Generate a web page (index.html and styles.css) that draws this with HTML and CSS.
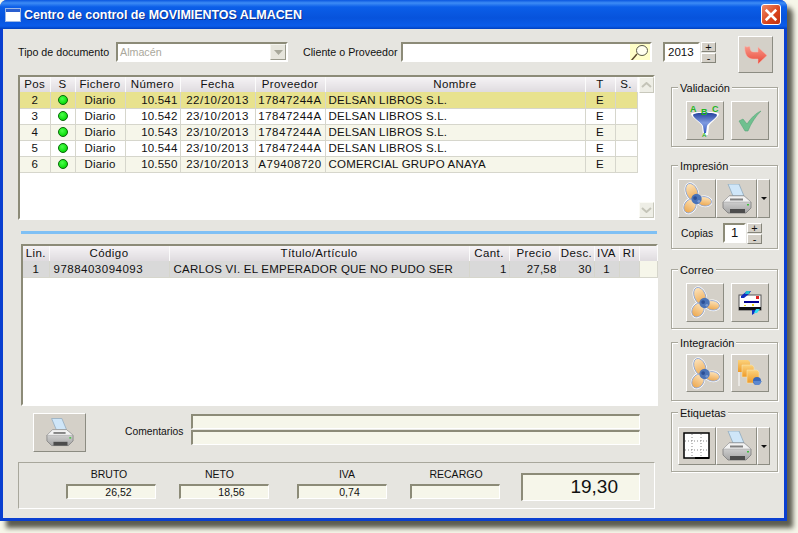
FILE: index.html
```html
<!DOCTYPE html>
<html lang="es">
<head>
<meta charset="utf-8">
<title>Centro de control de MOVIMIENTOS ALMACEN</title>
<link rel="stylesheet" href="styles.css">
</head>
<body>
<svg class="defs" width="0" height="0" aria-hidden="true">
  <defs>
    <linearGradient id="petal" x1="0" y1="0" x2="0" y2="1"><stop offset="0" stop-color="#fde4bc"/><stop offset="1" stop-color="#eca850"/></linearGradient>
    <linearGradient id="funnel" x1="0" y1="0" x2="0" y2="1"><stop offset="0" stop-color="#24409c"/><stop offset=".5" stop-color="#7f9be0"/><stop offset="1" stop-color="#3a5cc0"/></linearGradient>
    <linearGradient id="arrow" x1="0" y1="0" x2="0" y2="1"><stop offset="0" stop-color="#f9988a"/><stop offset="1" stop-color="#e84838"/></linearGradient>
    <linearGradient id="folder" x1="0" y1="0" x2="0" y2="1"><stop offset="0" stop-color="#fbd27c"/><stop offset="1" stop-color="#ee9a28"/></linearGradient>
    <linearGradient id="pbody" x1="0" y1="0" x2="0" y2="1"><stop offset="0" stop-color="#e4e4e4"/><stop offset="1" stop-color="#a4a4a4"/></linearGradient>
    <symbol id="i-prop" viewBox="0 0 32 34">
      <g stroke="#fff" stroke-width="2.400" fill="none">
        <ellipse cx="10.500" cy="10" rx="6" ry="9.500" transform="rotate(-22 10.500 10)"/>
        <ellipse cx="8.500" cy="25" rx="6" ry="8" transform="rotate(32 8.500 25)"/>
        <ellipse cx="24" cy="20" rx="7.500" ry="5" transform="rotate(8 24 20)"/>
      </g>
      <g stroke="#8ba3d2" stroke-width=".9" fill="url(#petal)">
        <ellipse cx="10.500" cy="10" rx="6" ry="9.500" transform="rotate(-22 10.500 10)"/>
        <ellipse cx="8.500" cy="25" rx="6" ry="8" transform="rotate(32 8.500 25)"/>
        <ellipse cx="24" cy="20" rx="7.500" ry="5" transform="rotate(8 24 20)"/>
      </g>
      <circle cx="15.500" cy="17.500" r="5.500" fill="#4b74b8"/>
      <circle cx="14" cy="16.500" r="2" fill="#2c4f96"/>
      <circle cx="18" cy="20" r="1.500" fill="#7c9bd2"/>
    </symbol>
    <symbol id="i-print" viewBox="0 0 30 30">
      <path d="M6 0l11 0 5 12H11z" fill="#cfe6f8" stroke="#8fa9bd" stroke-width=".8"/>
      <path d="M1 18l6-6h15l7 6v6l-5 5H6l-5-5z" fill="url(#pbody)" stroke="#7c7c7c" stroke-width=".8"/>
      <path d="M1 18l6-6h15l7 6z" fill="#f2f2f2" stroke="#9a9a9a" stroke-width=".5"/>
      <path d="M8 25h15v4H8z" fill="#4c4c4c"/>
      <path d="M8 14.500h13v2H8z" fill="#808080"/>
      <rect x="25" y="20" width="2" height="1.500" fill="#3fbf3f"/>
    </symbol>
    <symbol id="i-mag" viewBox="0 0 20 18">
      <path d="M1 17l6-7" stroke="#5b4a2c" stroke-width="1.500" fill="none"/>
      <ellipse cx="12" cy="6.500" rx="5.500" ry="5" fill="#fffff0" stroke="#5a5a48" stroke-width="1"/>
    </symbol>
  </defs>
</svg>

<div class="window">
  <header class="titlebar">
    <svg class="appicon" viewBox="0 0 16 14"><rect x=".5" y=".5" width="15" height="13" fill="#fff" stroke="#9db8e6"/><rect x="1" y="1" width="14" height="3" fill="#2a5fd0"/></svg>
    <h1 class="title">Centro de control de MOVIMIENTOS ALMACEN</h1>
    <button class="close" aria-label="Cerrar">
      <svg viewBox="0 0 12 12"><path d="M1.500 1.500l9 9M10.500 1.500l-9 9" stroke="#fff" stroke-width="2.200" fill="none"/></svg>
    </button>
  </header>

  <div class="client">
    <div class="toolbar">
      <span class="label label-tipo">Tipo de documento</span>
      <div class="field combo">
        <span class="disabled">Almacén</span>
        <span class="combo-btn"><svg viewBox="0 0 9 5" width="9" height="5"><path d="M0 0h9L4.500 5z" fill="#a8a89a"/></svg></span>
      </div>
      <span class="label label-cliente">Cliente o Proveedor</span>
      <div class="field search">
        <span class="search-btn"><svg width="20" height="18"><use href="#i-mag"/></svg></span>
      </div>
      <div class="field year">2013</div>
      <div class="spin"><span class="spin-btn">+</span><span class="spin-btn">-</span></div>
      <button class="btn exit" aria-label="Salir">
        <svg viewBox="0 0 24 20" width="24" height="20"><path d="M1 1c0 0 1 1 2 1s2-1 3 0c0 3 1 5 4 5h4V2l9 8.500-9 8.500v-5H9C3 14 0 8 1 1z" fill="url(#arrow)" stroke="#f6b9b0" stroke-width=".5"/></svg>
      </button>
    </div>

    <div class="columns">
      <main class="main">
        <div class="panel grid-top">
          <table class="grid g1">
            <colgroup><col class="c1"><col class="c2"><col class="c3"><col class="c4"><col class="c5"><col class="c6"><col class="c7"><col class="c8"><col class="c9"></colgroup>
            <thead><tr><th>Pos</th><th>S</th><th>Fichero</th><th>Número</th><th>Fecha</th><th>Proveedor</th><th>Nombre</th><th>T</th><th>S.</th></tr></thead>
            <tbody>
              <tr class="sel"><td class="ctr">2</td><td class="ctr"><i class="dot"></i></td><td class="ctr">Diario</td><td class="num">10.541</td><td class="ctr wide-text">22/10/2013</td><td class="ctr wide-text">17847244A</td><td>DELSAN LIBROS S.L.</td><td class="ctr">E</td><td></td></tr>
              <tr><td class="ctr">3</td><td class="ctr"><i class="dot"></i></td><td class="ctr">Diario</td><td class="num">10.542</td><td class="ctr wide-text">23/10/2013</td><td class="ctr wide-text">17847244A</td><td>DELSAN LIBROS S.L.</td><td class="ctr">E</td><td></td></tr>
              <tr class="alt"><td class="ctr">4</td><td class="ctr"><i class="dot"></i></td><td class="ctr">Diario</td><td class="num">10.543</td><td class="ctr wide-text">23/10/2013</td><td class="ctr wide-text">17847244A</td><td>DELSAN LIBROS S.L.</td><td class="ctr">E</td><td></td></tr>
              <tr><td class="ctr">5</td><td class="ctr"><i class="dot"></i></td><td class="ctr">Diario</td><td class="num">10.544</td><td class="ctr wide-text">23/10/2013</td><td class="ctr wide-text">17847244A</td><td>DELSAN LIBROS S.L.</td><td class="ctr">E</td><td></td></tr>
              <tr class="alt"><td class="ctr">6</td><td class="ctr"><i class="dot"></i></td><td class="ctr">Diario</td><td class="num">10.550</td><td class="ctr wide-text">23/10/2013</td><td class="ctr wide-text">A79408720</td><td>COMERCIAL GRUPO ANAYA</td><td class="ctr">E</td><td></td></tr>
            </tbody>
          </table>
          <div class="scrollbar">
            <span class="sb-btn"><svg width="11" height="6" viewBox="0 0 11 6"><path d="M1 5l4.500-4L10 5" stroke="#c4c4b8" stroke-width="2" fill="none"/></svg></span>
            <span class="sb-btn"><svg width="11" height="6" viewBox="0 0 11 6"><path d="M1 1l4.500 4L10 1" stroke="#c4c4b8" stroke-width="2" fill="none"/></svg></span>
          </div>
        </div>

        <div class="splitter"></div>

        <div class="panel grid-bottom">
          <table class="grid g2">
            <colgroup><col class="d1"><col class="d2"><col class="d3"><col class="d4"><col class="d5"><col class="d6"><col class="d7"><col class="d8"><col class="d9"></colgroup>
            <thead><tr><th>Lin.</th><th>Código</th><th>Título/Artículo</th><th>Cant.</th><th>Precio</th><th>Desc.</th><th>IVA</th><th>RI</th><th></th></tr></thead>
            <tbody>
              <tr class="grey"><td class="ctr">1</td><td class="pad code">9788403094093</td><td class="pad articulo">CARLOS VI. EL EMPERADOR QUE NO PUDO SER</td><td class="num">1</td><td class="num">27,58</td><td class="num">30</td><td class="ctr">1</td><td></td><td class="tail"></td></tr>
            </tbody>
          </table>
        </div>

        <div class="comments">
          <button class="btn print-big" aria-label="Imprimir"><svg width="28" height="29"><use href="#i-print"/></svg></button>
          <span class="label label-com">Comentarios</span>
          <div class="com-fields"><div class="field cream com"></div><div class="field cream com"></div></div>
        </div>

        <section class="totals">
          <div class="total t1"><span class="t-label">BRUTO</span><div class="field cream amount">26,52</div></div>
          <div class="total t2"><span class="t-label">NETO</span><div class="field cream amount">18,56</div></div>
          <div class="total t3"><span class="t-label">IVA</span><div class="field cream amount">0,74</div></div>
          <div class="total t4"><span class="t-label">RECARGO</span><div class="field cream amount"></div></div>
          <div class="field cream grand">19,30</div>
        </section>
      </main>

      <aside class="side">
        <section class="group g-val">
          <h2 class="legend">Validación</h2>
          <div class="btns spaced">
            <button class="btn tool" aria-label="Filtrar">
              <svg width="34" height="34" viewBox="0 0 34 34">
                <path d="M3 10c0-3 28-3 28 0 0 3-9 9-10 12l-1 9h-5l-1-9C13 19 3 13 3 10z" fill="#fff"/>
                <path d="M5 11c0-3 24-3 24 0 0 3-9 8-10 11l-1 7h-2l-1-7C14 19 5 14 5 11z" fill="url(#funnel)"/>
                <text x="2" y="8" class="abc">A</text><text x="13" y="11" class="abc">B</text><text x="24" y="8" class="abc">C</text><text x="14" y="33" class="abc small">A</text>
              </svg>
            </button>
            <button class="btn tool" aria-label="Validar">
              <svg width="24" height="22" viewBox="0 0 24 22"><path d="M1 11l4-2 4 5C13 8 18 3 23 1 18 6 13 13 10 21H7z" fill="#6fc08f" stroke="#4f9e70" stroke-width=".5"/></svg>
            </button>
          </div>
        </section>

        <section class="group g-imp">
          <h2 class="legend">Impresión</h2>
          <div class="btns joined">
            <button class="btn tool" aria-label="Vista previa"><svg width="30" height="33"><use href="#i-prop"/></svg></button>
            <button class="btn tool wide" aria-label="Imprimir"><svg width="30" height="30"><use href="#i-print"/></svg></button>
            <button class="btn drop" aria-label="Más"><i class="caret"></i></button>
          </div>
          <div class="copies">
            <span class="label">Copias</span>
            <div class="field copy">1</div>
            <div class="spin"><span class="spin-btn">+</span><span class="spin-btn">-</span></div>
          </div>
        </section>

        <section class="group g-cor">
          <h2 class="legend">Correo</h2>
          <div class="btns spaced">
            <button class="btn tool" aria-label="Vista previa"><svg width="30" height="33"><use href="#i-prop"/></svg></button>
            <button class="btn tool" aria-label="Enviar">
              <svg width="24" height="26" viewBox="0 0 24 26">
                <rect x="1" y="5" width="22" height="15" fill="#fff" stroke="#555"/>
                <rect x="1" y="17" width="22" height="3" fill="#111"/>
                <rect x="6" y="11" width="15" height="2" fill="#000090"/>
                <rect x="18" y="6" width="3" height="3" fill="#e02020"/>
                <path d="M3 6l6-5h4l-2 3-5 4H3z" fill="#1030c0"/><path d="M8 1h4l-1 3H7z" fill="#20c0d0"/>
                <path d="M14 25l7-5h-7z" fill="#1030c0"/><path d="M18 19h4l-3 4h-3z" fill="#30e0f0"/>
                <rect x="6" y="15" width="2" height="1" fill="#e8d820"/><rect x="14" y="14" width="2" height="2" fill="#e8d820"/>
              </svg>
            </button>
          </div>
        </section>

        <section class="group g-int">
          <h2 class="legend">Integración</h2>
          <div class="btns spaced">
            <button class="btn tool" aria-label="Vista previa"><svg width="30" height="33"><use href="#i-prop"/></svg></button>
            <button class="btn tool" aria-label="Integrar">
              <svg width="26" height="28" viewBox="0 0 26 28">
                <path d="M1 1h10l2 2v10H1z" fill="url(#folder)"/><path d="M5 6h10l2 2v10H5z" fill="url(#folder)" stroke="#f7e2b0" stroke-width=".6"/><path d="M10 11h10l2 2v11H10z" fill="url(#folder)" stroke="#f7e2b0" stroke-width=".6"/>
                <path d="M2 13v14" stroke="#fff" stroke-width="1"/>
                <circle cx="20" cy="22" r="4" fill="#3a68b8"/><path d="M16 22h9l-3 4h-4z" fill="#5c88d0"/>
              </svg>
            </button>
          </div>
        </section>

        <section class="group g-eti">
          <h2 class="legend">Etiquetas</h2>
          <div class="btns joined">
            <button class="btn tool" aria-label="Plantilla">
              <svg width="28" height="28" viewBox="0 0 28 28">
                <rect x="1" y="1" width="25" height="25" fill="#fff" stroke="#000" stroke-width="1.500"/>
                <path d="M9 2v24M18 2v24M2 9h24M2 18h24" stroke="#888" stroke-width="1" stroke-dasharray="1 2"/>
                <rect x="12" y="25" width="14" height="2" fill="#000"/>
              </svg>
            </button>
            <button class="btn tool wide" aria-label="Imprimir"><svg width="30" height="30"><use href="#i-print"/></svg></button>
            <button class="btn drop" aria-label="Más"><i class="caret"></i></button>
          </div>
        </section>
      </aside>
    </div>
  </div>
</div>
</body>
</html>
```

FILE: styles.css
```css
* { box-sizing: border-box; }
html, body { margin: 0; padding: 0; }
body {
  width: 798px; height: 533px; overflow: hidden;
  background: #f6f6e9;
  font-family: "Liberation Sans", Arial, sans-serif;
  font-size: 11.5px; color: #111;
}
.defs { position: absolute; }
.window {
  width: 787px; height: 521px;
  display: flex; flex-direction: column;
  background: #0a3fd0;
  border-radius: 7px 7px 0 0;
  box-shadow: 6px 7px 5px #5c5c50;
}
.titlebar {
  height: 29px; flex: none;
  display: flex; align-items: center;
  padding: 0 5px 0 5px;
  border-radius: 7px 7px 0 0;
  background: linear-gradient(#0a56e0 0, #3d8cf5 3px, #0b5ee8 7px, #0753dc 18px, #0a5cea 26px, #0040c0 29px);
}
.appicon { width: 16px; height: 14px; margin-right: 3px; }
.title {
  margin: 0; flex: 1;
  font: bold 12.500px "Liberation Sans", Arial, sans-serif;
  letter-spacing: -.05px;
  color: #fff; text-shadow: 1px 1px 0 #0a2f90;
}
.close {
  width: 20px; height: 21px; padding: 2px; margin-right: 1px;
  border: 1px solid #fff; border-radius: 3px;
  background: linear-gradient(135deg, #f08a68, #d8431c 60%, #c03010);
  display: flex; align-items: center; justify-content: center;
}
.close svg { width: 14px; height: 14px; }

.client {
  width: 781px; height: 489px; margin: 0 0 3px 3px;
  background: #e6e5e0;
  padding: 7px 0 0 15px;
}
.label { white-space: nowrap; font-size: 10.700px; }
.toolbar { display: flex; align-items: flex-start; height: 37px; }
.toolbar > .field, .toolbar > .spin { margin-top: 6px; }
.toolbar > .label { margin-top: 10px; line-height: 13px; }
.label-tipo { width: 98px; }
.field {
  border: 2px solid; border-color: #8c8b78 #fff #fff #8c8b78;
  background: #fff; font-size: 11.5px;
}
.cream { background: #f6f6ea; border-width: 2px 1px 1px 2px; }
.combo {
  width: 172px; height: 20px; display: flex; align-items: center; justify-content: space-between;
  background: #fff; padding-left: 2px; margin-right: 15px; font-size: 10.700px;
}
.disabled { color: #aaa89c; }
.combo-btn {
  width: 16px; height: 16px; background: #e6e5dc; display: flex; align-items: center; justify-content: center;
  border: 1px solid; border-color: #f4f4ee #9a9a8c #9a9a8c #f4f4ee;
}
.label-cliente { width: 98px; }
.search { width: 251px; height: 20px; margin-right: 11px; display: flex; justify-content: flex-end; }
.search-btn { width: 20px; height: 16px; background: #ffffc8; display: flex; overflow: hidden; }
.year { width: 37px; height: 20px; line-height: 16px; font-size: 11.500px; padding-left: 3px; margin-right: 1px; }
.spin { display: flex; flex-direction: column; width: 15px; height: 20px; gap: 1px; }
.spin-btn {
  flex: 1; background: #d4d0c8; text-align: center; line-height: 8px; font-size: 11px;
  border: 1px solid; border-color: #fff #85857a #85857a #fff;
}
.btn {
  background: #d4d0c8; padding: 0; margin: 0;
  border: 1px solid; border-color: #fff #8c8c82 #8c8c82 #fff;
  display: flex; align-items: center; justify-content: center;
}
.exit { width: 35px; height: 37px; margin-left: 22px; }

.columns { display: flex; margin-top: 2px; }
.main { width: 640px; }
.panel {
  border: 2px solid; border-color: #8c8b78 #fff #fff #8c8b78;
  background: #fff; display: flex;
}
.grid-top { width: 637px; height: 145px; }
.grid-bottom { width: 637px; height: 162px; margin-left: 3px; }
.grid {
  border-collapse: collapse; table-layout: fixed; align-self: flex-start;
  font-size: 11.500px; color: #111;
}
.g1 { width: 617px; }
.g2 { width: 634px; }
.c1 { width: 30px; } .c2 { width: 25px; } .c3 { width: 50px; } .c4 { width: 55px; } .c5 { width: 75px; }
.c6 { width: 70px; } .c7 { width: 260px; } .c8 { width: 30px; } .c9 { width: 22px; }
.d1 { width: 26px; } .d2 { width: 120px; } .d3 { width: 300px; } .d4 { width: 40px; } .d5 { width: 50px; }
.d6 { width: 35px; } .d7 { width: 25px; } .d8 { width: 20px; } .d9 { width: 18px; }
.grid th {
  height: 15px; padding: 0 0 1px; line-height: 13px; font-weight: normal; text-align: center; letter-spacing: .4px;
  background: linear-gradient(#f5f3f5, #dfdbdf);
  border-right: 1px solid #fbfbfb; white-space: nowrap; overflow: hidden;
}
.grid td {
  height: 16px; padding: 0 1px 0 3px; white-space: nowrap; overflow: hidden; letter-spacing: .2px;
  border-right: 1px solid #d6d6cc; border-bottom: 1px solid #d6d6cc;
}
.grid td.ctr { text-align: center; padding: 0; }
.grid td.num { text-align: right; padding: 0 2px 0 0; }
.grid td.pad { padding-left: 4px; }
.grid td.wide-text { letter-spacing: .5px; }
.grid td.code { letter-spacing: .5px; }
.grid td.articulo { letter-spacing: .23px; }
.sel td { background: #e8e28e; }
.alt td { background: #f6f6ea; }
.grey td { background: #d9d9d9; }
.grey td.tail { background: #f6f6ea; }
.dot {
  display: block; width: 10px; height: 10px; margin: 0 auto; border-radius: 50%;
  background: radial-gradient(circle at 40% 35%, #4cff4c, #10e010 65%, #0a9a0a);
  border: 1px solid #0a6a0a;
}
.scrollbar {
  width: 15px; margin-left: 1px; flex: none; background: #fff;
  display: flex; flex-direction: column; justify-content: space-between;
}
.sb-btn {
  height: 16px; background: #eeeee6; display: flex; align-items: center; justify-content: center;
  border: 1px solid; border-color: #fbfbf6 #c8c8bc #c8c8bc #fbfbf6;
}
.splitter { height: 3px; margin: 11px 0 10px 3px; background: #7fc0f4; width: 636px; }

.comments { display: flex; align-items: flex-start; margin-top: 7px; height: 49px; padding-left: 15px; }
.print-big { width: 53px; height: 39px; }
.label-com { width: 66px; margin: 13px 0 0 39px; font-size: 10.300px; }
.com-fields { display: flex; flex-direction: column; gap: 1px; margin-top: 1px; }
.com { width: 449px; height: 15px; }

.totals {
  width: 637px; height: 47px;
  display: flex; align-items: flex-start;
  border: 1px solid; border-color: #a8a79c #fff #fff #a8a79c;
  padding: 0 0 0 47px;
}
.total { display: flex; flex-direction: column; align-items: stretch; width: 90px; margin-top: 4px; }
.t-label { text-align: center; height: 17px; line-height: 14px; font-size: 10.500px; }
.amount { height: 15px; line-height: 12px; text-align: center; padding-left: 14px; font-size: 10.500px; }
.t1 .t-label { padding-right: 4px; }
.t2 .t-label { padding-right: 9px; }
.t3 .t-label { padding-left: 10px; }
.t4 .t-label { padding-left: 2px; }
.t2 { margin-left: 23px; }
.t3 { margin-left: 28px; }
.t4 { margin-left: 23px; }
.grand {
  width: 119px; height: 28px; margin: 10px 0 0 21px;
  font-size: 19px; line-height: 24px; text-align: right; padding-right: 21px;
}

.side { width: 107px; margin-left: 13px; padding-top: 12px; }
.group {
  width: 107px; margin-bottom: 0;
  border: 1px solid #a8a79c;
  box-shadow: 1px 1px 0 #fff, inset 1px 1px 0 #fff;
}
.legend {
  margin: -7px 0 0 6px; padding: 0 2px; width: fit-content;
  height: 14px; font: normal 11px/14px "Liberation Sans", Arial, sans-serif;
  background: #e6e5e0;
}
.g-val { height: 60px; }
.g-imp { height: 84px; margin-top: 18px; }
.g-cor { height: 60px; margin-top: 20px; }
.g-int { height: 59px; margin-top: 13px; }
.g-eti { height: 60px; margin-top: 11px; }
.btns { display: flex; margin-top: 6px; }
.spaced { gap: 7px; margin-left: 14px; }
.joined { margin-left: 6px; }
.g-int .btns { margin-top: 4px; }
.g-eti .btns { margin-top: 7px; }
.tool { width: 38px; height: 39px; }
.g-int .tool, .g-eti .tool, .g-eti .drop { height: 38px; }
.wide { width: 41px; }
.drop { width: 13px; height: 39px; }
.caret { width: 0; height: 0; border: 3px solid transparent; border-top: 3px solid #111; border-bottom: 0; }
.abc { font: 700 9px "Liberation Sans", Arial, sans-serif; fill: #22b422; }
.abc.small { font-size: 6px; }
.copies { display: flex; align-items: center; margin: 5px 0 0 9px; height: 20px; }
.copies .label { width: 42px; font-size: 10.300px; }
.copy { width: 23px; height: 20px; font-size: 13px; line-height: 16px; text-align: center; margin-right: 1px; }
```
